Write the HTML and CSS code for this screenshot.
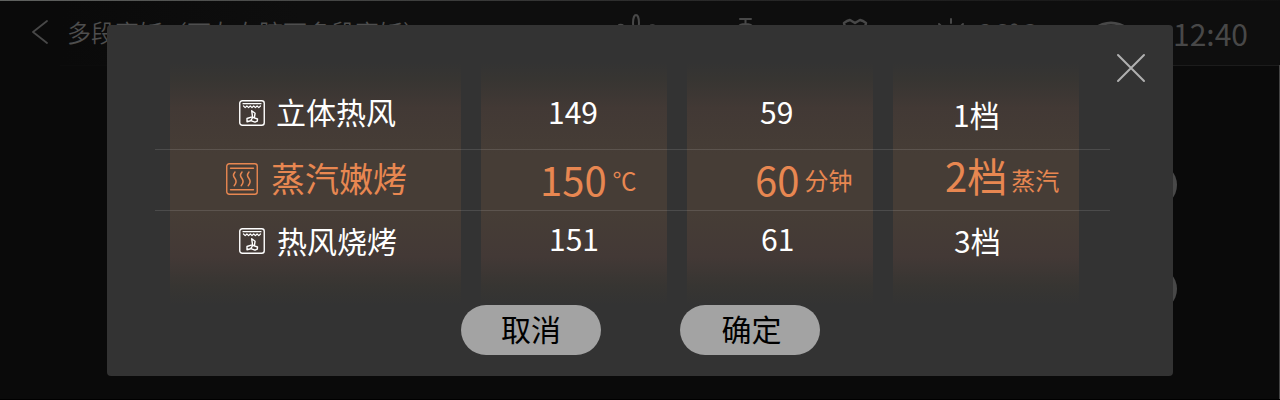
FILE: index.html
```html
<!DOCTYPE html>
<html lang="zh-CN">
<head>
<meta charset="utf-8">
<title>多段烹饪</title>
<link rel="stylesheet" href="styles.css">
</head>
<body>
<svg class="defs" aria-hidden="true">
  <symbol id="fan-oven" viewBox="0 0 26 26">
    <rect x=".75" y=".75" width="24.500" height="24.500" rx="2.500" stroke-width="1.400"/>
    <path d="M4 3.700h18" stroke-width="1.200"/>
    <path d="M4.500 6l1.700 1.600 1.700-1.600 1.700 1.600 1.700-1.600 1.700 1.600 1.700-1.600 1.700 1.600 1.700-1.600 1.700 1.600 1.700-1.600" stroke-width="1.200"/>
    <path d="M13.500 16.500L12.700 10.800l3.400 2.400-.6 3.600M13 16.800l-5 1.700v3.200l3.700-1 2-3.200M14.500 17.500l4 1.500-.2 2.200-2.300 1-3.500-1.400" stroke-width="1.400"/>
  </symbol>
  <symbol id="steam-oven" viewBox="0 0 32 32">
    <rect x=".75" y=".75" width="30.500" height="30.500" rx="2.500" stroke-width="1.400"/>
    <path d="M4.500 5.200h23M4.500 26.800h23" stroke-width="1.400"/>
    <path d="M9 9c-2.500 3-1.500 4.500 0 6.500s1.500 4.500-.8 7.200M16 9c-2.500 3-1.500 4.500 0 6.500s1.500 4.500-.8 7.200M23 9c-2.500 3-1.500 4.500 0 6.500s1.500 4.500-.8 7.200" stroke-width="1.500"/>
  </symbol>
</svg>
<div class="screen">
  <header class="topbar">
    <svg class="back" viewBox="0 0 16 24"><path d="M15 1L1 12l14 11"/></svg>
    <h1 class="title">多段烹饪（可左右腔下多段烹饪）</h1>
    <div class="status">
      <svg class="status-icon fan" viewBox="0 0 40 36"><ellipse cx="20" cy="9" rx="3" ry="8"/><path d="M3 11c4-1 6 2 8 5M38 11.500c-4-1-6 2-8 5"/></svg>
      <svg class="status-icon lamp" viewBox="0 0 24 30"><path d="M6 3h11M11.500 3v5M4 12c0-5.500 15-5.500 15 0"/></svg>
      <svg class="status-icon heart" viewBox="0 0 26 30"><path d="M3 12L2 8l3-2 3-1 5 3 5-3 3 1 3 2-1 4"/></svg>
      <svg class="status-icon sun" viewBox="0 0 30 30"><path d="M15 4v4M3 9l4 4M27 9l-4 4"/><circle cx="15" cy="18" r="6"/></svg>
      <span class="temp">26°C</span>
      <svg class="status-icon wifi" viewBox="0 0 40 30"><path d="M3 10q17-12 34 0"/></svg>
      <span class="clock">12:40</span>
    </div>
  </header>
  <main class="backdrop"><i class="knob"></i><i class="knob"></i></main>
</div>
<section class="dialog">
  <svg class="close" viewBox="0 0 30 30"><path d="M2 2l26 26M28 2l-26 26"/></svg>
  <div class="picker">
    <div class="column mode">
      <div class="row prev"><svg class="icon"><use href="#fan-oven"/></svg><span>立体热风</span></div>
      <div class="row current"><svg class="icon large"><use href="#steam-oven"/></svg><span>蒸汽嫩烤</span></div>
      <div class="row next"><svg class="icon"><use href="#fan-oven"/></svg><span>热风烧烤</span></div>
    </div>
    <div class="column heat">
      <div class="row prev">149</div>
      <div class="row current"><span>150</span><span class="unit">℃</span></div>
      <div class="row next">151</div>
    </div>
    <div class="column time">
      <div class="row prev">59</div>
      <div class="row current"><span>60</span><span class="unit">分钟</span></div>
      <div class="row next">61</div>
    </div>
    <div class="column level">
      <div class="row prev">1档</div>
      <div class="row current"><span>2档</span><span class="unit">蒸汽</span></div>
      <div class="row next">3档</div>
    </div>
    <div class="band"></div>
  </div>
  <div class="actions"><button class="btn">取消</button><button class="btn confirm">确定</button></div>
</section>
</body>
</html>
```
FILE: styles.css
```css
* { box-sizing: border-box; }
body { margin: 0; width: 1280px; height: 400px; overflow: hidden; background: #0a0a0a; font-family: "Noto Sans CJK SC", sans-serif; }
.defs { position: absolute; width: 0; height: 0; }
svg { fill: none; stroke: currentColor; stroke-linecap: round; stroke-linejoin: round; flex: none; }

.screen { height: 400px; border-bottom: 1px solid #000; color: #484848; overflow: hidden; }
.topbar { display: flex; height: 65px; padding-left: 32px; border-style: solid; border-width: 1px 0 0; border-image: linear-gradient(90deg, #606260, #2c2c2c 50%, #111) 1; background: linear-gradient(90deg, #0a0a0a 62px, #0e0e0e 300px); }
.back { width: 16px; height: 24px; margin-top: 19px; stroke-width: 1.800; }
.title { width: 381px; margin: 13px 0 0 19px; color: #4e4e4e; font-size: 24px; line-height: 36px; font-weight: 350; white-space: nowrap; }
.status { display: flex; flex: 1; padding-left: 168px; }
.status-icon { stroke-width: 2; margin-top: 13px; }
.fan { width: 40px; height: 36px; }
.lamp { width: 24px; height: 30px; margin: 15px 0 0 78px; }
.heart { width: 26px; height: 30px; margin: 14px 0 0 84px; stroke-width: 2.500; }
.sun { width: 30px; height: 30px; margin: 14px 0 0 68px; }
.temp { width: 66px; margin: 14px 0 0 12px; font-size: 28px; line-height: 36px; }
.wifi { width: 40px; height: 30px; margin: 18px 0 0 47px; stroke-width: 3; }
.clock { margin: 8px 0 0 42px; font-size: 30px; line-height: 48px; }
.backdrop { display: flex; flex-direction: column; align-items: flex-end; gap: 60px; height: 335px; padding: 98px 102px 0 0; border-right: 1px solid #444; background: linear-gradient(90deg, #0c0c0c, #0c0c0c 110px, #1c1c1c 300px) 60px 0 / 100% 1px no-repeat; }
.knob { width: 44px; height: 44px; border-radius: 50%; background: #484848; }

.dialog { position: absolute; top: 25px; left: 107px; width: 1066px; height: 351px; padding: 37px 0 0 48px; border-radius: 4px; background: #333; color: #fff; }
.close { position: absolute; top: 28px; right: 27px; width: 30px; height: 30px; color: #b0b0b0; stroke-width: 2; }
.picker { position: relative; display: grid; grid-template-columns: 291px 186px 186px 186px; gap: 20px; width: 955px; height: 243px; padding-left: 15px; }
.column { display: grid; grid-template-rows: 88px 61px 94px; background: linear-gradient(#333, #373532 7%, #423935 19%, #463d36 38%, #463d36 62%, #433936 80%, #373532 92%, #333); }
.band { position: absolute; top: 87px; left: 0; right: 0; height: 62px; border: solid rgba(255, 255, 255, .12); border-width: 1px 0; }
.row { display: flex; align-items: flex-start; font-size: 30px; line-height: 40px; white-space: nowrap; }
.current { color: #e88751; font-size: 40px; line-height: 50px; padding-top: 3px; }
.unit { margin: 2px 0 0 5px; font-size: 24px; }
.icon { width: 26px; height: 26px; margin: 9px 11px 0 0; }
.large { width: 32px; height: 32px; margin: 10px 13px 0 0; }

.mode .prev { padding: 29px 0 0 69px; }
.mode .current { padding-left: 56px; font-size: 34px; }
.mode .next { padding: 9px 0 0 69px; }
.mode .next .icon { margin: 8px 12px 0 0; }
.heat .prev { padding: 29px 0 0 67px; }
.heat .current { padding: 4px 0 0 59px; }
.heat .next { padding: 7px 0 0 68px; }
.heat .unit { margin: 1px 0 0 6px; }
.time .prev { padding: 29px 0 0 73px; }
.time .current { padding: 4px 0 0 68px; }
.time .next { padding: 7px 0 0 74px; }
.time .unit { margin: 1px 0 0 5px; }
.level .prev { padding: 32px 0 0 60px; }
.level .current { padding: 0 0 0 52px; }
.level .next { padding: 9px 0 0 61px; }
.level .unit { margin: 5px 0 0 4px; }

.actions { display: flex; gap: 79px; padding-left: 306px; }
.btn { width: 140px; height: 50px; padding: 0 0 4px; border: 0; border-radius: 25px; background: #a3a3a3; color: #000; font: 30px/46px "Noto Sans CJK SC", sans-serif; }
.confirm { padding-left: 3px; }
```
